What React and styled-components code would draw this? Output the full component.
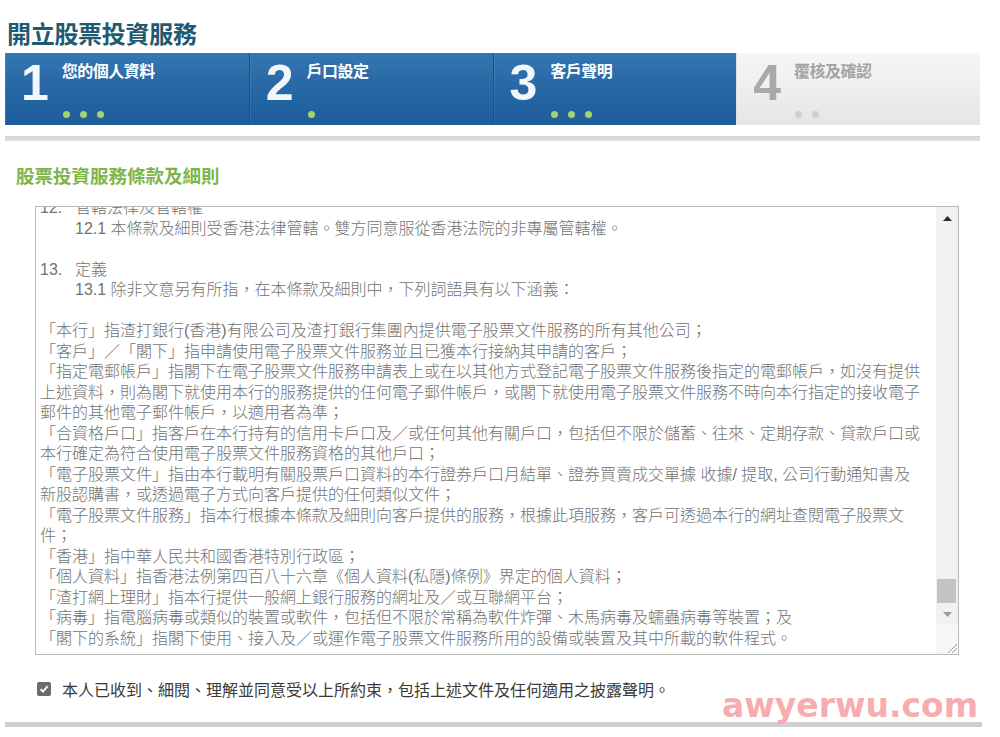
import React from "react"
import styled, { createGlobalStyle } from "styled-components"

const steps = [
  { no: 1, label: "您的個人資料", dots: 3 },
  { no: 2, label: "戶口設定", dots: 1 },
  { no: 3, label: "客戶聲明", dots: 3 },
  { no: 4, label: "覆核及確認", dots: 2, pending: true },
]

const terms = [
  { no: "12.", text: "管轄法律及管轄權" },
  { indent: true, text: "12.1 本條款及細則受香港法律管轄。雙方同意服從香港法院的非專屬管轄權。" },
  { text: "" },
  { no: "13.", text: "定義" },
  { indent: true, text: "13.1 除非文意另有所指，在本條款及細則中，下列詞語具有以下涵義：" },
  { text: "" },
  { text: "「本行」指渣打銀行(香港)有限公司及渣打銀行集團內提供電子股票文件服務的所有其他公司；" },
  { text: "「客戶」／「閣下」指申請使用電子股票文件服務並且已獲本行接納其申請的客戶；" },
  { text: "「指定電郵帳戶」指閣下在電子股票文件服務申請表上或在以其他方式登記電子股票文件服務後指定的電郵帳戶，如沒有提供" },
  { text: "上述資料，則為閣下就使用本行的服務提供的任何電子郵件帳戶，或閣下就使用電子股票文件服務不時向本行指定的接收電子" },
  { text: "郵件的其他電子郵件帳戶，以適用者為準；" },
  { text: "「合資格戶口」指客戶在本行持有的信用卡戶口及／或任何其他有關戶口，包括但不限於儲蓄、往來、定期存款、貸款戶口或" },
  { text: "本行確定為符合使用電子股票文件服務資格的其他戶口；" },
  { text: "「電子股票文件」指由本行載明有關股票戶口資料的本行證券戶口月結單、證券買賣成交單據 收據/ 提取, 公司行動通知書及" },
  { text: "新股認購書，或透過電子方式向客戶提供的任何類似文件；" },
  { text: "「電子股票文件服務」指本行根據本條款及細則向客戶提供的服務，根據此項服務，客戶可透過本行的網址查閱電子股票文" },
  { text: "件；" },
  { text: "「香港」指中華人民共和國香港特別行政區；" },
  { text: "「個人資料」指香港法例第四百八十六章《個人資料(私隱)條例》界定的個人資料；" },
  { text: "「渣打網上理財」指本行提供一般網上銀行服務的網址及／或互聯網平台；" },
  { text: "「病毒」指電腦病毒或類似的裝置或軟件，包括但不限於常稱為軟件炸彈、木馬病毒及蠕蟲病毒等裝置；及" },
  { text: "「閣下的系統」指閣下使用、接入及／或運作電子股票文件服務所用的設備或裝置及其中所載的軟件程式。" },
]

function App() {
  return (
    <Page>
      <GlobalStyle />
      <Title>開立股票投資服務</Title>
      <Steps>
        {steps.map((s) => (
          <Step key={s.no} $pending={s.pending}>
            <StepNo $pending={s.pending}>{s.no}</StepNo>
            <StepInfo>
              <StepLabel $pending={s.pending}>{s.label}</StepLabel>
              <Dots>
                {Array.from({ length: s.dots }).map((_, i) => (
                  <Dot key={i} $pending={s.pending} />
                ))}
              </Dots>
            </StepInfo>
          </Step>
        ))}
      </Steps>
      <Rule />
      <Section>
        <SectionTitle>股票投資服務條款及細則</SectionTitle>
        <TermsBox>
          <TermsText>
            <TermsScroll>
              {terms.map((t, i) => (
                <Line key={i} $indent={t.indent}>
                  {t.no && <LineNo>{t.no}</LineNo>}
                  {t.text || "\u00a0"}
                </Line>
              ))}
            </TermsScroll>
          </TermsText>
          <ScrollBar>
            <ArrowButton>
              <svg width="9" height="5" viewBox="0 0 9 5">
                <polygon points="0,5 4.5,0 9,5" fill="#2b2b2b" />
              </svg>
            </ArrowButton>
            <Track>
              <Thumb />
            </Track>
            <ArrowButton>
              <svg width="9" height="5" viewBox="0 0 9 5">
                <polygon points="0,0 9,0 4.5,5" fill="#9a9a9a" />
              </svg>
            </ArrowButton>
            <Corner>
              <svg width="12" height="12" viewBox="0 0 12 12">
                <line x1="2" y1="11" x2="11" y2="2" stroke="#9c9c9c" strokeWidth="1" />
                <line x1="6" y1="11" x2="11" y2="6" stroke="#9c9c9c" strokeWidth="1" />
              </svg>
            </Corner>
          </ScrollBar>
        </TermsBox>
        <Agree>
          <CheckBox>
            <svg width="10" height="10" viewBox="0 0 10 10">
              <path d="M1.5 5.2 L4 7.6 L8.6 2.2" fill="none" stroke="#fff" strokeWidth="1.8" />
            </svg>
          </CheckBox>
          本人已收到、細閱、理解並同意受以上所約束，包括上述文件及任何適用之披露聲明。
        </Agree>
      </Section>
      <BottomRule />
      <Watermark>awyerwu.com</Watermark>
    </Page>
  )
}

export default App

const GlobalStyle = createGlobalStyle`
  html, body {
    margin: 0;
    padding: 0;
    background: #fff;
  }
  body {
    font-family: "Liberation Sans", "Noto Sans CJK TC", sans-serif;
  }
`

const Page = styled.div`
  position: relative;
  width: 1000px;
  height: 737px;
  overflow: hidden;
  padding: 0 0 0 5px;
  box-sizing: border-box;
`

const Title = styled.h1`
  margin: 18px 0 0 2px;
  font-family: "Noto Sans CJK TC", sans-serif;
  font-size: 24px;
  line-height: 30px;
  font-weight: 700;
  color: #1f5b70;
  letter-spacing: -0.3px;
`

const Steps = styled.div`
  margin-top: 5px;
  width: 975px;
  height: 72px;
  display: grid;
  grid-template-columns: repeat(4, 1fr);
`

const Step = styled.div`
  display: flex;
  padding: 5px 0 0 16px;
  background: ${(p) =>
    p.$pending
      ? "linear-gradient(to bottom, #f6f6f6 0%, #eeeeee 50%, #e5e5e5 100%)"
      : "linear-gradient(to bottom, #3676b1 0%, #2b6ba8 35%, #2263a1 70%, #1d5d9c 100%)"};
  border-left: 1px solid ${(p) => (p.$pending ? "#e0e0e0" : "#1c5188")};
  box-shadow: inset 1px 0 0 rgba(255, 255, 255, 0.08);

  &:first-child {
    border-left: none;
  }
`

const StepNo = styled.div`
  font-family: "Liberation Sans", Arial, sans-serif;
  font-size: 50px;
  line-height: 50px;
  font-weight: 700;
  color: ${(p) => (p.$pending ? "#a9a9a9" : "#f3f6fa")};
`

const StepInfo = styled.div`
  margin-left: 13px;
  display: flex;
  flex-direction: column;
`

const StepLabel = styled.div`
  margin-top: 2px;
  font-family: "Noto Sans CJK TC", sans-serif;
  font-size: 16px;
  line-height: 20px;
  font-weight: 700;
  color: ${(p) => (p.$pending ? "#a4a4a4" : "#ffffff")};
  letter-spacing: -0.5px;
`

const Dots = styled.div`
  margin-top: 31px;
  display: flex;
  gap: 10px;
  padding-left: 1px;
`

const Dot = styled.span`
  width: 7px;
  height: 7px;
  border-radius: 50%;
  background: ${(p) => (p.$pending ? "#cfcfcf" : "#a6d36e")};
`

const Rule = styled.div`
  margin-top: 11px;
  width: 975px;
  height: 5px;
  background: linear-gradient(to bottom, #d2d2d2, #e2e2e2);
`

const Section = styled.div`
  padding-left: 11px;
`

const SectionTitle = styled.h2`
  margin: 22px 0 0 0;
  font-family: "Noto Sans CJK TC", sans-serif;
  font-size: 18.5px;
  line-height: 24px;
  font-weight: 700;
  color: #7db548;
`

const TermsBox = styled.div`
  margin: 19px 0 0 19px;
  width: 924px;
  height: 449px;
  box-sizing: border-box;
  border: 1px solid #b9b9b9;
  display: flex;
  background: #fff;
`

const TermsText = styled.div`
  flex: 1;
  overflow: hidden;
  padding-left: 4px;
`

const TermsScroll = styled.div`
  margin-top: -9px;
`

const Line = styled.div`
  height: 20.5px;
  line-height: 20.5px;
  white-space: nowrap;
  font-size: 16px;
  font-weight: 300;
  color: #727272;
  padding-left: ${(p) => (p.$indent ? "35px" : "0")};
`

const LineNo = styled.span`
  display: inline-block;
  width: 35px;
`

const ScrollBar = styled.div`
  width: 22px;
  display: flex;
  flex-direction: column;
  background: #f1f1f1;
`

const ArrowButton = styled.div`
  height: 22px;
  display: flex;
  align-items: center;
  justify-content: center;
`

const Track = styled.div`
  flex: 1;
  display: flex;
  flex-direction: column;
  justify-content: flex-end;
  padding: 0 2px 0 1px;
`

const Thumb = styled.div`
  height: 24px;
  background: #c3c3c3;
`

const Corner = styled.div`
  height: 29px;
  display: flex;
  align-items: flex-end;
  justify-content: flex-end;
  background: #f6f6f6;
`

const Agree = styled.label`
  margin: 24px 0 0 21px;
  height: 20px;
  display: flex;
  align-items: center;
  gap: 11px;
  font-family: "Noto Sans CJK TC", sans-serif;
  font-size: 16px;
  color: #3a3a3a;
`

const CheckBox = styled.span`
  width: 14px;
  height: 14px;
  border-radius: 2px;
  background: #6c6c6c;
  display: flex;
  align-items: center;
  justify-content: center;
`

const BottomRule = styled.div`
  margin-top: 23px;
  width: 977px;
  height: 5px;
  background: #d0d0d0;
`

const Watermark = styled.div`
  position: absolute;
  left: 722px;
  top: 689px;
  font-family: "DejaVu Sans", sans-serif;
  font-size: 33px;
  line-height: 33px;
  font-weight: 700;
  color: #f7acaf;
  z-index: 2;
`
